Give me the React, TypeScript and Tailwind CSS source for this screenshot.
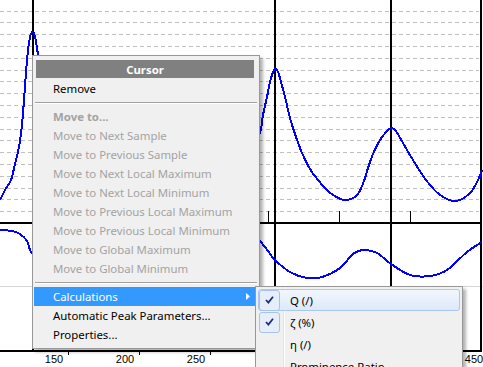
const upper: [number, number][] = [
  [0, 200], [5, 190], [11, 180], [15, 164], [18, 152], [20, 141], [22, 125], [24, 100], [26, 72], [28, 50],
  [30, 37], [32, 32], [34, 33], [36, 42], [38, 55], [42, 85], [50, 120], [65, 155], [90, 180], [130, 197],
  [160, 200], [200, 190], [235, 170], [252, 150], [260, 133], [263, 115], [267, 97], [270, 82], [273, 72],
  [275, 69], [278, 72], [281, 82], [285, 97], [290, 118], [295, 134], [302, 153], [310, 169], [318, 180],
  [326, 189], [333, 195], [345, 200], [357, 195], [364, 181], [368, 168], [373, 154], [380, 140], [387, 131],
  [391, 128], [395, 130], [399, 136], [403, 143], [413, 160], [426, 180], [440, 195], [456, 201], [470, 193],
  [478, 180], [482, 170],
]

const lower: [number, number][] = [
  [0, 230], [12, 231], [20, 234], [27, 241], [31, 252], [40, 262], [60, 274], [90, 278], [130, 262],
  [170, 242], [210, 232], [240, 233], [255, 237], [260, 241], [268, 251], [275, 260], [290, 272], [307, 278],
  [322, 277], [340, 268], [353, 254], [364, 250], [377, 253], [391, 264], [410, 275], [430, 276], [447, 270],
  [467, 252], [482, 242],
]

// catmull-rom -> cubic bezier
function smooth(pts: [number, number][]) {
  let d = `M${pts[0][0]} ${pts[0][1]}`
  for (let i = 0; i < pts.length - 1; i++) {
    const p0 = pts[i - 1] || pts[i]
    const p1 = pts[i]
    const p2 = pts[i + 1]
    const p3 = pts[i + 2] || p2
    const c1x = p1[0] + (p2[0] - p0[0]) / 6
    const c1y = p1[1] + (p2[1] - p0[1]) / 6
    const c2x = p2[0] - (p3[0] - p1[0]) / 6
    const c2y = p2[1] - (p3[1] - p1[1]) / 6
    d += ` C${c1x} ${c1y} ${c2x} ${c2y} ${p2[0]} ${p2[1]}`
  }
  return d
}

const gridY = Array.from({ length: 18 }, (_, i) => Math.round(10.5 + i * 11.8) + 0.5)

function Chart() {
  return (
    <svg className="absolute inset-0" width={483} height={367} viewBox="0 0 483 367">
      {gridY.map((y) => (
        <line key={y} x1={0} x2={479} y1={y} y2={y} stroke="#c0c0c0" strokeDasharray="4 3" shapeRendering="crispEdges" />
      ))}
      <line x1={0} x2={483} y1={286.5} y2={286.5} stroke="#d4d4d4" shapeRendering="crispEdges" />

      {/* ticks */}
      {[55, 126, 197, 268, 339, 410].map((x) => (
        <line key={x} x1={x + 0.5} x2={x + 0.5} y1={211} y2={222} stroke="#000" shapeRendering="crispEdges" />
      ))}
      {[68, 139, 210, 281, 352, 423].map((x) => (
        <line key={x} x1={x + 0.5} x2={x + 0.5} y1={351} y2={355} stroke="#000" shapeRendering="crispEdges" />
      ))}

      {/* frame */}
      <rect x={0} y={222} width={482} height={2} fill="#000" />
      <rect x={0} y={350} width={482} height={2} fill="#000" />
      <rect x={480} y={0} width={2} height={352} fill="#000" />

      {/* cursors */}
      <rect x={32} y={0} width={2} height={350} fill="#000" />
      <rect x={274} y={0} width={2} height={350} fill="#000" />
      <rect x={390} y={0} width={2} height={350} fill="#000" />

      <path d={smooth(upper)} fill="none" stroke="#0000ff" strokeWidth={2} shapeRendering="crispEdges" />
      <path d={smooth(lower)} fill="none" stroke="#0000ff" strokeWidth={2} shapeRendering="crispEdges" />

      <g fontFamily="'Liberation Sans', Arial, sans-serif" fontSize={11} fill="#000" textAnchor="middle">
        <text x={54} y={363}>150</text>
        <text x={125} y={363}>200</text>
        <text x={196} y={363}>250</text>
        <text x={474} y={363}>450</text>
      </g>
    </svg>
  )
}

function Separator() {
  return (
    <div className="h-[9px] flex flex-col justify-start pt-[4px] pl-[2px] pr-[2px]">
      <div className="h-px bg-[#a0a0a0]" />
      <div className="h-px bg-white" />
    </div>
  )
}

function Item({ label, disabled, bold }: { label: string; disabled?: boolean; bold?: boolean }) {
  return (
    <div
      className={`h-[19px] flex items-center pl-[20px] pt-[1px] whitespace-nowrap ${
        disabled ? 'text-[#a3a3a3]' : 'text-black'
      } ${bold ? 'font-bold text-[#9a9a9a]' : ''}`}
    >
      {label}
    </div>
  )
}

function CheckMark() {
  return (
    <svg width="9" height="8" viewBox="0 0 9 8">
      <path d="M1 4 L3.4 6.6 L8 0.8" fill="none" stroke="#1d2f7a" strokeWidth="1.8" />
    </svg>
  )
}

function SubItem({ label, checked, hot }: { label: string; checked?: boolean; hot?: boolean }) {
  return (
    <div
      className={`h-[22px] flex items-center rounded-[3px] border ${
        hot ? 'border-[#a8c8ee] bg-gradient-to-b from-[#f2f7fe] to-[#dde9f9]' : 'border-transparent'
      }`}
    >
      <div className="w-[22px] h-[22px] -ml-px -mt-px -mb-px flex items-center justify-center">
        {checked && (
          <div className="w-[21px] h-[21px] rounded-[3px] border border-[#a6c3e8] bg-[#e6eefa] flex items-center justify-center">
            <CheckMark />
          </div>
        )}
      </div>
      <div className="pl-[10px] pt-[1px] whitespace-nowrap text-black">{label}</div>
    </div>
  )
}

export default function App() {
  return (
    <div
      className="relative w-[483px] h-[367px] overflow-hidden bg-white text-[11.4px] leading-none"
      style={{ fontFamily: "'Noto Sans', 'Segoe UI', sans-serif" }}
    >
      <Chart />

      {/* Context menu */}
      <div className="absolute left-[32px] top-[55px] w-[228px] h-[294px] bg-[#f0f0f0] border border-[#979797] pt-[4px] shadow-[3px_3px_3px_rgba(0,0,0,0.3)]">
        <div className="ml-[3px] mr-[5px] h-[18px] bg-[#808080] text-white font-bold flex items-center justify-center pt-[1px]">
          Cursor
        </div>
        <div className="h-[1px]" />
        <Item label="Remove" />
        <Separator />
        <Item label="Move to..." disabled bold />
        <Item label="Move to Next Sample" disabled />
        <Item label="Move to Previous Sample" disabled />
        <Item label="Move to Next Local Maximum" disabled />
        <Item label="Move to Next Local Minimum" disabled />
        <Item label="Move to Previous Local Maximum" disabled />
        <Item label="Move to Previous Local Minimum" disabled />
        <Item label="Move to Global Maximum" disabled />
        <Item label="Move to Global Minimum" disabled />
        <Separator />
        <div className="mx-[1px] h-[19px] bg-[#3399ff] text-white flex items-center pl-[19px] pt-[1px] relative">
          Calculations
          <svg className="absolute right-[8px] top-[6px]" width="4" height="7" viewBox="0 0 4 7">
            <path d="M0 0 L4 3.5 L0 7 Z" fill="#fff" />
          </svg>
        </div>
        <Item label="Automatic Peak Parameters..." />
        <Item label="Properties..." />
      </div>

      {/* Submenu */}
      <div className="absolute left-[255px] top-[286px] w-[208px] h-[100px] bg-[#f0f0f0] border border-[#979797] p-[2px] shadow-[3px_3px_3px_rgba(0,0,0,0.3)]">
        <div className="absolute left-[27px] top-0 bottom-0 w-px bg-[#e2e3e3]" />
        <div className="absolute left-[28px] top-0 bottom-0 w-px bg-white" />
        <div className="relative flex flex-col">
          <SubItem label="Q (/)" checked hot />
          <SubItem label="ζ (%)" checked />
          <SubItem label="η (/)" />
          <SubItem label="Prominence Ratio" />
        </div>
      </div>
    </div>
  )
}
